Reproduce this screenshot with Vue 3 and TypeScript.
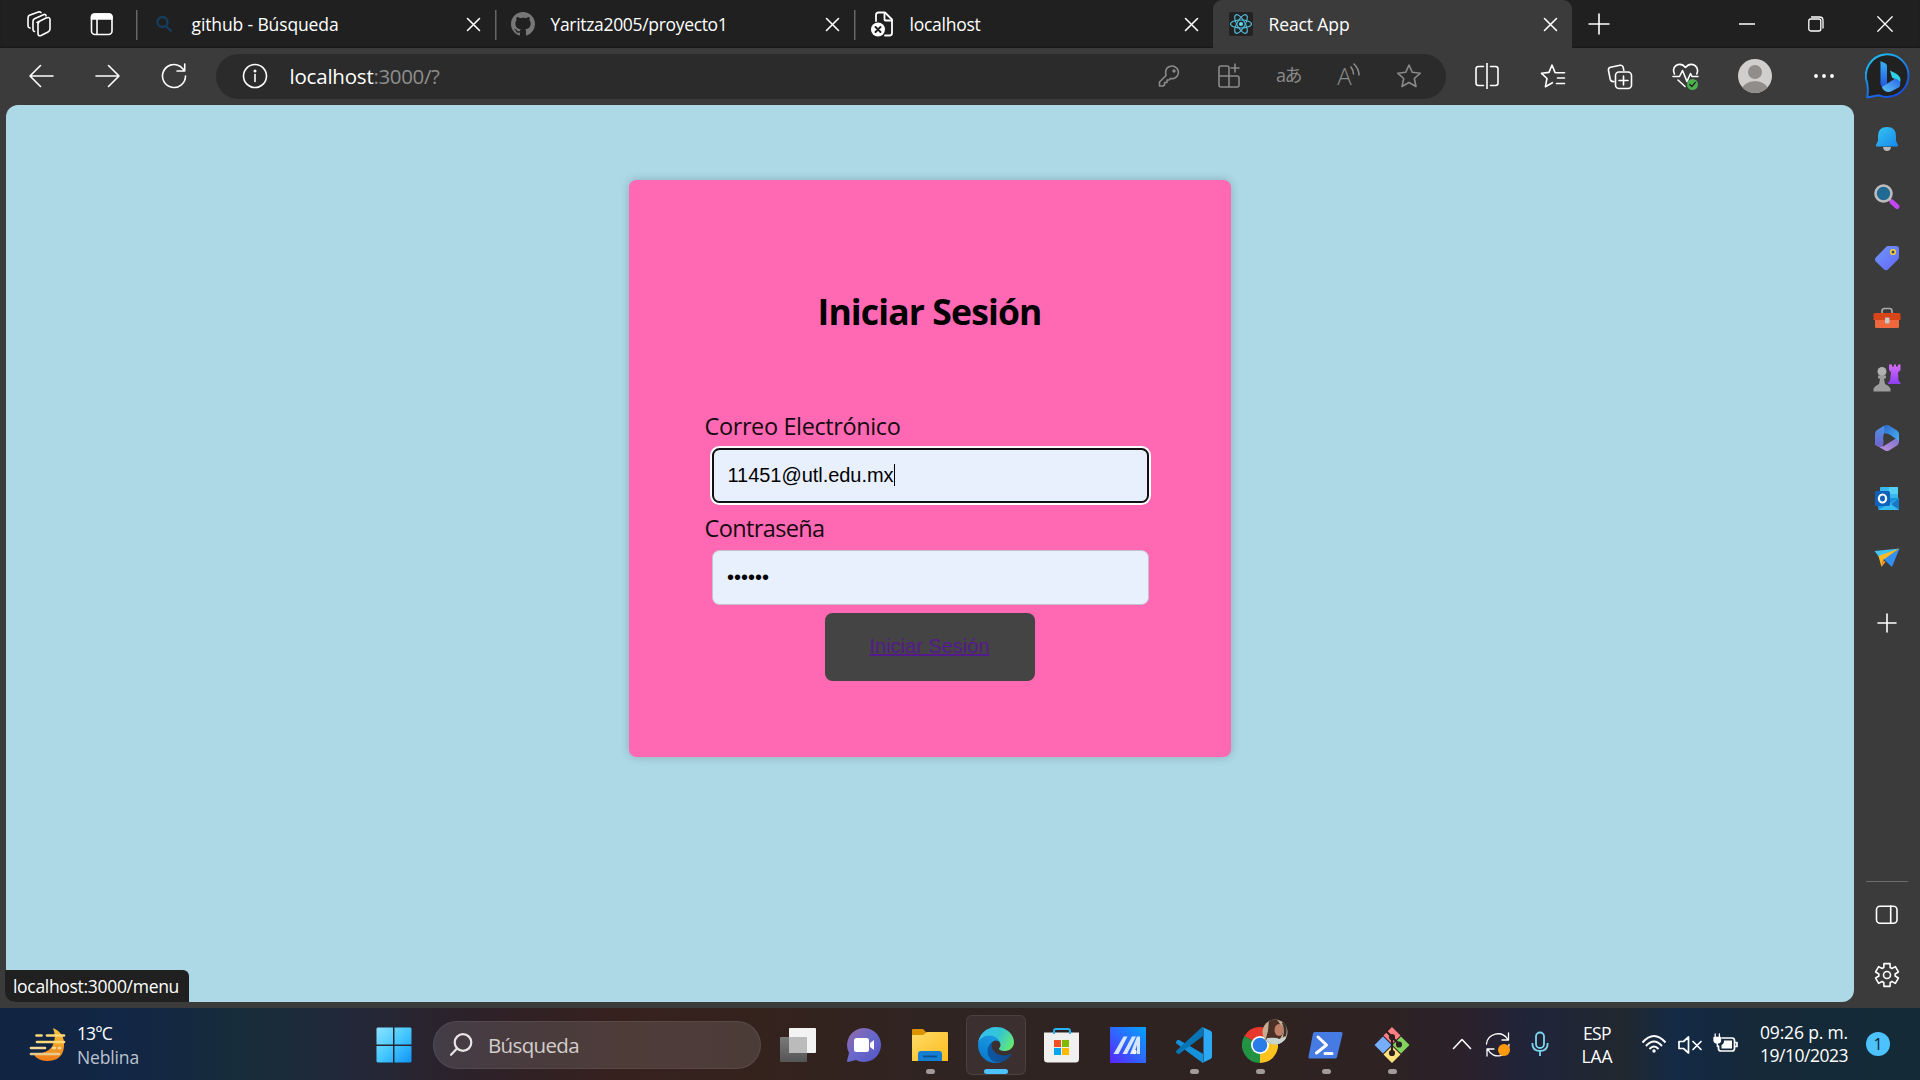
<script setup lang="ts">
import type { Directive } from 'vue'

interface Tab {
  id: string
  title: string
  textWidth: number
  active?: boolean
}

const tabs: Tab[] = [
  { id: 'search', title: 'github - Búsqueda', textWidth: 147 },
  { id: 'github', title: 'Yaritza2005/proyecto1', textWidth: 177 },
  { id: 'error', title: 'localhost', textWidth: 71 },
  { id: 'react', title: 'React App', textWidth: 81, active: true },
]

const lang = ['ESP', 'LAA']

// Tracks a label out or in so that it occupies the given width in pixels.
const vFit: Directive<HTMLElement, number> = {
  mounted(el, binding) {
    const count = (el.textContent ?? '').trim().length
    const width = el.getBoundingClientRect().width
    el.style.letterSpacing = `${(binding.value - width) / count}px`
  },
}

function gearPath(): string {
  const points: string[] = []
  const polar = (r: number, deg: number) => {
    const a = (deg * Math.PI) / 180
    return `${(13 + r * Math.cos(a)).toFixed(2)} ${(13 + r * Math.sin(a)).toFixed(2)}`
  }
  for (let k = 0; k < 6; k++) {
    const base = -90 + 60 * k
    points.push(polar(8.2, base - 23), polar(11.8, base - 15), polar(11.8, base + 15), polar(8.2, base + 23))
  }
  return `M${points.join('L')}Z`
}
const gear = gearPath()
</script>

<template>
  <div class="screen">
    <header class="tabstrip">
      <div class="tools">
        <svg width="26" height="26" viewBox="0 0 26 26" class="ln">
          <path d="M11 11.5 20 7q4-1.500 4 1.500V18q0 2-2 3l-7 3.500q-3 1-3-2V13q0-1 1-1.700Z" />
          <path d="M8.500 20.500Q7 20 7 18.500V10q0-1.500 1.500-2.300L18 3.500M4 17q-2-.5-2-2V7q0-2 1.500-2.700L13 .8q1.500 0 2 .8M20 5q0-2-2-1.500" />
        </svg>
        <svg width="24" height="24" viewBox="0 0 24 24" class="ln">
          <rect x="1.500" y="2" width="20.500" height="20.500" rx="3.500" />
          <path d="M1.500 7V5q0-3 3-3H19q3 0 3 3v2Z" fill="#fff" />
          <path d="M7 7v15" />
        </svg>
      </div>
      <div v-for="tab in tabs" :key="tab.id" class="tab" :class="{ active: tab.active }">
        <div class="fav">
          <svg v-if="tab.id === 'search'" width="18" height="18" viewBox="0 0 18 18" fill="none" stroke="#153e61" stroke-width="2.300">
            <circle cx="7.500" cy="7" r="5" /><path d="m11 11 5.500 5.500" />
          </svg>
          <svg v-else-if="tab.id === 'github'" width="24" height="24" viewBox="0 0 16 16" fill="#777">
            <path d="M8 0C3.580 0 0 3.580 0 8c0 3.540 2.290 6.530 5.470 7.590.4.070.55-.17.55-.38 0-.19-.01-.82-.01-1.490-2.010.37-2.530-.49-2.690-.94-.09-.23-.48-.94-.82-1.130-.28-.15-.68-.52-.01-.53.63-.01 1.080.58 1.230.82.72 1.210 1.870.87 2.330.66.07-.52.28-.87.51-1.070-1.780-.2-3.640-.89-3.640-3.950 0-.87.31-1.590.82-2.150-.08-.2-.36-1.020.08-2.120 0 0 .67-.21 2.200.82.64-.18 1.320-.27 2-.27s1.360.09 2 .27c1.530-1.040 2.200-.82 2.200-.82.44 1.100.16 1.920.08 2.120.51.56.82 1.270.82 2.150 0 3.070-1.870 3.750-3.650 3.950.29.25.54.73.54 1.480 0 1.070-.01 1.930-.01 2.200 0 .21.15.46.55.38A8.010 8.010 0 0 0 16 8c0-4.420-3.580-8-8-8Z" />
          </svg>
          <svg v-else-if="tab.id === 'error'" width="24" height="26" viewBox="0 0 24 26" class="ln">
            <path d="M6 10V4q0-2.500 2.500-2.500H15l7 7V22q0 2.500-2.500 2.500H15" stroke-width="1.800" />
            <path d="M14.500 2v6.500q0 1 1 1H22" stroke-width="1.800" />
            <circle cx="8" cy="18.500" r="7" fill="#fff" stroke="none" />
            <path d="m5.500 16 5 5m0-5-5 5" stroke="#202020" stroke-width="2" />
          </svg>
          <svg v-else width="24" height="24" viewBox="0 0 24 24" fill="none" stroke="#53c1de" stroke-width="1.100">
            <rect width="24" height="24" rx="2" fill="#222" stroke="none" />
            <ellipse cx="12" cy="12" rx="10.500" ry="4" />
            <ellipse cx="12" cy="12" rx="10.500" ry="4" transform="rotate(60 12 12)" />
            <ellipse cx="12" cy="12" rx="10.500" ry="4" transform="rotate(120 12 12)" />
            <circle cx="12" cy="12" r="2" fill="#61dafb" stroke="none" />
          </svg>
        </div>
        <div class="title"><span v-fit="tab.textWidth">{{ tab.title }}</span></div>
        <svg class="close ln" width="15" height="15" viewBox="0 0 15 15"><path d="m1.500 1.500 12 12m0-12-12 12" /></svg>
      </div>
      <svg class="newtab ln" width="22" height="22" viewBox="0 0 22 22"><path d="M11 1v20M1 11h20" /></svg>
      <div class="winctl">
        <svg width="16" height="16" viewBox="0 0 16 16" class="ln"><path d="M0 8h16" /></svg>
        <svg width="16" height="16" viewBox="0 0 16 16" class="ln thin"><rect x=".8" y="3" width="12" height="12" rx="2" /><path d="M3.500 1h8q3.500 0 3.500 3.500V12" /></svg>
        <svg width="16" height="16" viewBox="0 0 16 16" class="ln thin"><path d="m.8.8 14.400 14.400m0-14.400L.8 15.200" /></svg>
      </div>
    </header>

    <nav class="toolbar">
      <div class="slot w66"><svg width="26" height="24" viewBox="0 0 26 24" class="ln"><path d="M25 12H2M12.500 1.500 2 12l10.500 10.500" /></svg></div>
      <div class="slot w66"><svg width="26" height="24" viewBox="0 0 26 24" class="ln"><path d="M1 12h23M13.500 1.500 24 12 13.500 22.500" /></svg></div>
      <div class="slot w66"><svg width="26" height="26" viewBox="0 0 26 26" class="ln"><path d="M24.500 13A11.500 11.500 0 1 1 19 3.200L23.500 7.500M23.700 1v7H16" /></svg></div>
      <div class="address">
        <div class="info"><svg width="26" height="26" viewBox="0 0 26 26" class="ln"><circle cx="13" cy="13" r="11.500" /><path d="M13 11.500v7" /><circle cx="13" cy="8" r=".7" fill="#fff" /></svg></div>
        <div class="url"><b v-fit="84">localhost</b><span v-fit="66">:3000/?</span></div>
        <div class="slot w60"><svg width="22" height="22" viewBox="0 0 22 22" class="dim"><path d="M8 10.500Q6.500 4 11 1.800q4-2 7.500 1 3 3.500 1.200 7.300-2.200 4.200-7.200 3.400L11 15H9v2.500H6.500V20L5 21H1.500v-4Z" /><circle cx="16" cy="6" r=".9" /></svg></div>
        <div class="slot w60"><svg width="24" height="26" viewBox="0 0 24 26" class="dim"><path d="M12 13V5q0-2-2-2H4Q2 3 2 5v17q0 2 2 2h16q2 0 2-2v-7q0-2-2-2H2M12 13v11M18 1v8M14 5h8" /></svg></div>
        <div class="slot w60 glyph cjk"><span v-fit="25">aあ</span></div>
        <div class="slot w60 read"><span>A</span><svg width="10" height="15" viewBox="0 0 10 15" class="dim"><path d="M1 4q2.500 3.500 2.500 7M4 1q5 5 5 11" /></svg></div>
        <div class="slot w60"><svg width="26" height="26" viewBox="0 0 26 26" class="dim"><path d="m13 2 3.300 7.300 8 .9-6 5.300 1.700 8L13 19.500l-7 4 1.700-8-6-5.300 8-.9Z" /></svg></div>
      </div>
      <div class="slot w66"><svg width="26" height="26" viewBox="0 0 26 26" class="ln"><path d="M9.500 3.500h-5Q2 3.500 2 6v14q0 2.500 2.500 2.500h5M16.500 3.500h5Q24 3.500 24 6v14q0 2.500-2.500 2.500h-5M13 0v26" /></svg></div>
      <div class="slot w66"><svg width="26" height="26" viewBox="0 0 26 26" class="ln"><path d="M15.500 9.700h9M17.500 15h7M16.500 20.500h8M16 9.700l-1-.3L12 2 9 9.400l-7.500.9L7 15.500l-1.600 8.200 7-4" /></svg></div>
      <div class="slot w66"><svg width="26" height="27" viewBox="0 0 26 27" class="ln"><path d="M7 18.500q-3 .5-3.800-2.300L1.500 7.500Q1 5 3.500 4.300l9.500-2q2.500-.5 3.200 2l.6 3" /><rect x="8.500" y="9" width="16" height="16.500" rx="3.500" /><path d="M16.500 13v9M12 17.500h9" /></svg></div>
      <div class="slot w66"><svg width="28" height="27" viewBox="0 0 28 27" class="ln"><path d="M2.500 11Q0 5.500 4 2.500q5.500-3 9.500 2 4-5 9.500-2 4 3 1.800 8.500M1 13.500h6.500l3-6 4.500 11 3.500-8 1.500 3h6M6 17l7 6.500" /><circle cx="20.500" cy="21.500" r="5.500" fill="#4caf50" stroke="none" /><path d="m17.800 21.500 2 2 3.500-4" stroke="#222" stroke-width="1.300" /></svg></div>
      <div class="slot avatar"><svg width="34" height="34" viewBox="0 0 34 34"><defs><clipPath id="av"><circle cx="17" cy="17" r="17" /></clipPath></defs><g clip-path="url(#av)"><rect width="34" height="34" fill="#d1cfcd" /><circle cx="17" cy="13" r="7" fill="#918d8b" /><ellipse cx="17" cy="31" rx="13" ry="9" fill="#918d8b" /></g></svg></div>
      <div class="slot dots"><svg width="22" height="6" viewBox="0 0 22 6" fill="#fff"><circle cx="3" cy="3" r="1.900" /><circle cx="11" cy="3" r="1.900" /><circle cx="19" cy="3" r="1.900" /></svg></div>
      <div class="slot bing"><svg width="46" height="46" viewBox="0 0 46 46">
        <defs>
          <linearGradient id="b1" x1="0" y1="0" x2=".6" y2="1"><stop stop-color="#20c8ee" /><stop offset="1" stop-color="#164fe4" /></linearGradient>
          <linearGradient id="b2" x1="0" y1="0" x2="0" y2="1"><stop stop-color="#36b3f7" /><stop offset="1" stop-color="#2155e4" /></linearGradient>
          <linearGradient id="b3" x1="0" y1="1" x2="1" y2="0"><stop stop-color="#5bc8fa" /><stop offset="1" stop-color="#2a63e8" /></linearGradient>
        </defs>
        <path d="M2.200 44.500Q3.500 38 2.200 30A21.300 21.300 0 1 1 14 42.300Q9 43 2.200 44.500Z" fill="#212121" stroke="url(#b1)" stroke-width="1.900" stroke-linejoin="round" />
        <path d="m15.500 8 5 2.500q1.500.8 1.500 2.500v18l-4 3.500q-2.500-1.500-2.500-4Z" fill="url(#b2)" />
        <path d="m25 17.500 6 3q6 3.500 4 9.500-4-4-8-5.500Z" fill="#2cd1e5" />
        <path d="m17 34 10-6.500 3.500-2q7 2.500 4 8.500l-7.500 4q-3.500 2-7 0Q17 36 17 34Z" fill="url(#b3)" />
      </svg></div>
    </nav>

    <div class="body">
      <main class="page">
        <form class="card" @submit.prevent>
          <h1><span v-fit="224">Iniciar Sesión</span></h1>
          <label><span v-fit="196">Correo Electrónico</span></label>
          <div class="field focused"><span v-fit="166">11451@utl.edu.mx</span><i class="caret"></i></div>
          <label><span v-fit="120">Contraseña</span></label>
          <div class="field second">••••••</div>
          <div class="btn"><a v-fit="120">Iniciar Sesión</a></div>
        </form>
        <div class="status"><span v-fit="166">localhost:3000/menu</span></div>
      </main>
      <aside class="sidebar">
        <div class="side"><svg width="24" height="26" viewBox="0 0 24 26"><defs><linearGradient id="bell" x1="0" y1="0" x2="1" y2="1"><stop stop-color="#36c5f0" /><stop offset="1" stop-color="#1688ed" /></linearGradient></defs><path d="M8 21h8q-.5 4-4 4t-4-4Z" fill="#b9b9c0" /><path d="M12 1q9 0 9 9v5l2 4q.5 1.500-1 1.500H2Q.5 20.500 1 19l2-4v-5q0-9 9-9Z" fill="url(#bell)" /></svg></div>
        <div class="side up lens"><svg width="28" height="28" viewBox="0 0 28 28"><path d="m16 16 3 3" stroke="#999" stroke-width="3" /><path d="m19 19 5 4.500" stroke="#c346f2" stroke-width="5" stroke-linecap="round" /><circle cx="10.500" cy="10.500" r="8" fill="#216a94" stroke="#bdbdbd" stroke-width="2.600" /></svg></div>
        <div class="side up"><svg width="26" height="26" viewBox="0 0 26 26"><defs><linearGradient id="tag" x1="0" y1="0" x2="1" y2="1"><stop stop-color="#7098ff" /><stop offset="1" stop-color="#6366f5" /></linearGradient></defs><path d="M14 1h8q3 0 3 3v8q0 1.500-1 2.500L14 24.500q-2 1.500-4 0L1.800 16.500q-1.500-2 0-4L12 2q1-1 2-1Z" fill="url(#tag)" /><circle cx="19" cy="7" r="2.300" fill="#36407a" stroke="#f8d22b" stroke-width="1.600" /></svg></div>
        <div class="side up"><svg width="28" height="24" viewBox="0 0 28 24"><path d="M9 8V5q0-2.500 2.500-2.500h5Q19 2.500 19 5v3" fill="none" stroke="#aaa" stroke-width="1.700" /><rect x="2" y="10" width="24" height="12" rx="1.500" fill="#ee673d" /><path d="M2 7h24q1.500 0 1.500 1.500V14H.5V8.500Q.5 7 2 7Z" fill="#d84519" /><rect x="12" y="11.500" width="4.500" height="6" rx="1" fill="#c8c8c8" /></svg></div>
        <div class="side up"><svg width="28" height="28" viewBox="0 0 28 28"><defs><linearGradient id="rook" x1="0" y1="0" x2="0" y2="1"><stop stop-color="#d66cf9" /><stop offset="1" stop-color="#8d3df0" /></linearGradient></defs><path d="M16 .5h3v2h2v-2h2v2h2v-2h2.500V6L25 8.500l.5 8 2 2.500v1H15v-1l2-2.500 1-8L16 6Z" fill="url(#rook)" /><circle cx="9" cy="7.500" r="4.500" fill="#b0b0b0" /><path d="M5 11.500h8v2.500l-2 1 1 5q4 1.500 5.500 4.500v3H.5v-3Q2 21.500 6 20l1-5-2-1Z" fill="#9c9c9c" /></svg></div>
        <div class="side up"><svg width="26" height="28" viewBox="0 0 26 28"><defs><linearGradient id="m1" x1="0" y1="0" x2="0" y2="1"><stop stop-color="#4a93e6" /><stop offset="1" stop-color="#7161c8" /></linearGradient><linearGradient id="m2" x1="0" y1="0" x2="1" y2="1"><stop stop-color="#2e69cf" /><stop offset="1" stop-color="#45b3f2" /></linearGradient><linearGradient id="m3" x1="0" y1="1" x2="1" y2="0"><stop stop-color="#c495dc" /><stop offset="1" stop-color="#7c6fd0" /></linearGradient></defs><path d="M1 17v2q0 1.500 1.500 2.500l8.500 5q2 1 4 0l8-5q2-1.500 2-4v-5l-8 5-8 5Z" fill="url(#m3)" /><path d="M10 1.800 3 6Q1 7.500 1 10v9q2 4 5 4 3.500-.3 3.500-4V11.500Q9.500 9 12 7.500Z" fill="url(#m1)" /><path d="M10 1.800q3-1.600 5-.3l8 5q2 1.200 2 3.500v7L17 11.500 10.500 9Z" fill="url(#m2)" /><path d="m13.500 9.500 4 2.300v4.700l-4 2.300-4-2.300v-4.700Z" fill="#3b3b3b" /></svg></div>
        <div class="side"><svg width="26" height="26" viewBox="0 0 26 26"><rect x="6" y="1" width="18" height="14" rx="1" fill="#39b8ee" /><path d="M15 1h8q1 0 1 1v6h-9Z" fill="#55d0f5" /><path d="M4 12h21v12H6q-2 0-2-2Z" fill="#1892dc" /><path d="m4 24 21-12v12Z" fill="#35bdf3" /><path d="m17 18 8-6v12Z" fill="#1878c8" /><rect x="1" y="5" width="15" height="15" rx="1.500" fill="#0f62bc" /><ellipse cx="8.500" cy="12.500" rx="3.600" ry="4" fill="none" stroke="#fff" stroke-width="2.200" /></svg></div>
        <div class="side"><svg width="26" height="22" viewBox="0 0 26 22"><path d="M.5 3 25.500.5 5 9Z" fill="#43c3ee" /><path d="M25.500.5 18 19 9.500 11Z" fill="#348ff0" /><path d="m4.500 8 21-7.500L9 12l-1.500 7Z" fill="#ffbb25" /><path d="m9 12-1.500 7 4-5Z" fill="#f79620" /></svg></div>
        <div class="side plus"><svg width="20" height="20" viewBox="0 0 20 20" class="ln"><path d="M10 1v18M1 10h18" /></svg></div>
        <div class="sidebottom">
          <div class="side"><svg width="24" height="20" viewBox="0 0 24 20" class="ln"><rect x="1.500" y="1.200" width="20.500" height="17" rx="3.500" /><path d="M15.700 1v17" /></svg></div>
          <div class="side"><svg width="26" height="26" viewBox="0 0 26 26" class="ln"><path :d="gear" /><circle cx="13" cy="13" r="3.500" /></svg></div>
        </div>
      </aside>
    </div>

    <footer class="taskbar">
      <div class="weather">
        <svg width="38" height="36" viewBox="0 0 38 36"><defs><linearGradient id="moon" x1="0" y1="0" x2="0" y2="1"><stop stop-color="#f5c63b" /><stop offset="1" stop-color="#f07c18" /></linearGradient></defs><path d="M24 1q12 5 11 18-1 15-17 15Q8 34 4 26q12 2 19-6 5-9 1-19Z" fill="url(#moon)" /><g stroke-width="2.700" stroke-linecap="round"><path d="M7.500 8.500h5M18 8.500h17M8 15h27" stroke="#ffd978" /><path d="M2 21h14M24 21h2M30 21h1" stroke="#f6d694" /><path d="M2 27h28" stroke="#e8ca8e" /></g></svg>
        <div class="lines"><div><span v-fit="35">13°C</span></div><div class="muted"><span v-fit="62">Neblina</span></div></div>
      </div>
      <svg class="start" width="36" height="36" viewBox="0 0 36 36"><defs><linearGradient id="win" x1="0" y1="0" x2="1" y2="1"><stop stop-color="#8ee3ff" /><stop offset=".5" stop-color="#45c8ff" /><stop offset="1" stop-color="#0f93f8" /></linearGradient></defs><path d="M1.500.5H17v17H.5v-16ZM18.500.5h16l1 1v16h-17ZM.5 19H17v16.500H1.500l-1-1ZM18.500 19h17v15.500l-1 1h-16Z" fill="url(#win)" /></svg>
      <div class="search"><svg width="26" height="26" viewBox="0 0 26 26" fill="none" stroke="#eae6e6" stroke-width="2.200" stroke-linecap="round"><circle cx="15" cy="10.500" r="8.300" /><path d="m9 16.500-6 6.300" /></svg><span v-fit="91">Búsqueda</span></div>
      <div class="apps">
        <div class="app"><svg width="36" height="36" viewBox="0 0 36 36"><defs><linearGradient id="tv" x1="0" y1="0" x2="0" y2="1"><stop stop-color="#7b7b7b" /><stop offset="1" stop-color="#555" /></linearGradient></defs><rect x="9" y="1" width="27" height="25" rx="1" fill="#f3f3f3" /><rect x="0" y="10" width="27" height="25" rx="1" fill="url(#tv)" /><path d="M9 10h18v16H9Z" fill="#bbb" /></svg></div>
        <div class="app"><svg width="36" height="36" viewBox="0 0 36 36"><defs><linearGradient id="chat" x1="0" y1="0" x2="1" y2="1"><stop stop-color="#9568a8" /><stop offset=".5" stop-color="#6769cb" /><stop offset="1" stop-color="#5752c4" /></linearGradient></defs><path d="M18 1a17 17 0 1 1-8 32l-8 2q-1 0-1-1l2-8A17 17 0 0 1 18 1Z" fill="url(#chat)" /><rect x="8" y="11" width="15" height="14" rx="2.500" fill="#fff" /><path d="m24 16 4-3v10l-4-3Z" fill="#fff" /></svg></div>
        <div class="app run"><svg width="36" height="36" viewBox="0 0 36 36"><defs><linearGradient id="fold" x1="0" y1="0" x2="1" y2="1"><stop stop-color="#ffda68" /><stop offset="1" stop-color="#fcbd1d" /></linearGradient></defs><path d="M0 3q0-1 1-1h10l4 4v3H0Z" fill="#dc9300" /><path d="M0 8h11l4-3h20q1 0 1 1v28H0Z" fill="url(#fold)" /><path d="M6 34V27q0-3 3-3h18q3 0 3 3v7Z" fill="#147fd2" /><path d="M11 29.500h14" stroke="#0b5390" stroke-width="2" /></svg></div>
        <div class="app current"><svg width="36" height="36" viewBox="0 0 256 256">
          <defs><linearGradient id="e1" x1="0" y1=".5" x2="1" y2=".5"><stop stop-color="#0c59a4" /><stop offset="1" stop-color="#114a8b" /></linearGradient><linearGradient id="e2" x1=".7" y1="0" x2=".3" y2="1"><stop stop-color="#1b9de2" /><stop offset="1" stop-color="#0878ce" /></linearGradient><linearGradient id="e3" x1="0" y1=".3" x2="1" y2=".7"><stop stop-color="#35c1f1" /><stop offset=".5" stop-color="#34c5d5" /><stop offset="1" stop-color="#66eb6e" /></linearGradient></defs>
          <path fill="url(#e1)" d="M231 190.500c-3.400 1.800-6.900 3.400-10.500 4.700-11.500 4.300-23.700 6.500-35.900 6.500-47.300 0-88.500-32.500-88.500-74.300.1-11.400 6.400-21.900 16.400-27.300-42.800 1.800-53.800 46.400-53.800 72.500 0 74 68.100 81.400 82.800 81.400 7.900 0 19.800-2.300 27-4.600l1.300-.4c27.600-9.500 51-28.100 66.600-52.800 1.200-1.900.6-4.300-1.200-5.500-1.300-.8-2.900-.9-4.200-.2Z" />
          <path fill="url(#e2)" d="M105.700 241.400c-8.900-5.500-16.600-12.800-22.700-21.300-26.300-36-18.400-86.500 17.600-112.800 3.800-2.700 7.700-5.200 11.900-7.200 3.100-1.500 8.400-4.100 15.500-4 10.100.1 19.600 4.900 25.700 13 4 5.400 6.300 11.900 6.400 18.700 0-.2 24.500-79.600-80-79.600-43.900 0-80 41.700-80 78.200-.2 19.300 4 38.500 12.100 56 27.600 58.800 94.800 87.600 156.400 67.100-21.100 6.600-44.100 3.700-62.900-8.100Z" />
          <path fill="url(#e3)" d="M152.300 148.900c-.8 1-3.300 2.500-3.300 5.700 0 2.600 1.700 5.100 4.700 7.200 14.400 10 41.500 8.700 41.600 8.700 10.700 0 21.100-2.900 30.300-8.300 18.800-11 30.400-31.100 30.400-52.900.3-22.400-8-37.300-11.300-43.900C223.500 23.900 177.700 0 128 0 58 0 1 56.200 0 126.200c.5-36.500 36.800-66 80-66 3.500 0 23.500.3 42 10.100 16.300 8.600 24.900 18.900 30.800 29.200 6.200 10.700 7.300 24.100 7.300 29.500 0 5.300-2.700 13.300-7.800 19.900Z" />
        </svg></div>
        <div class="app"><svg width="36" height="36" viewBox="0 0 36 36"><path d="M0 5.500h35V32q0 3.500-3.500 3.500h-28Q0 35.500 0 32Z" fill="#f0f0f0" /><path d="M10 7V4q0-2 2-2h12q2 0 2 2v3" fill="none" stroke="#28b4f0" stroke-width="2" /><path d="M10 13h7v7h-7Z" fill="#f25022" /><path d="M18 13h7v7h-7Z" fill="#7fba00" /><path d="M10 21h7v7h-7Z" fill="#00a4ef" /><path d="M18 21h7v7h-7Z" fill="#ffb900" /></svg></div>
        <div class="app"><svg width="36" height="36" viewBox="0 0 36 36"><defs><linearGradient id="as" x1="0" y1="1" x2="1" y2="0"><stop stop-color="#5a24fa" /><stop offset=".5" stop-color="#2e68ff" /><stop offset="1" stop-color="#03a3fc" /></linearGradient></defs><path d="M0 0h36v36H0Z" fill="url(#as)" /><path d="m3.500 27 10-17.500h4L8.500 27ZM12.500 27l9.500-17.500h4L17 27ZM20 27l7-17.500h3V27h-3V18l-3 9Z" fill="#d7e6ff" /><circle cx="24.500" cy="25" r="2.200" fill="#fff" /></svg></div>
        <div class="app run"><svg width="36" height="36" viewBox="0 0 36 36"><path d="M27 0 9 17.500 3.500 13.300q-1-.8-2 0L.5 14.300q-.8 1 0 2L27 36V27L12 18 27 9Z" fill="#0b83c9" /><path d="M27 36 .5 16.500q-.9-1.200 0-2l1-1.200q1-.8 2 0L27 27Z" fill="#1590db" /><path d="M27 9 3.500 26.700q-1 .8-2 0l-1-1q-.9-1.200 0-2.200L25 1l2-1Z" fill="#0874b5" /><path d="m26 0 8.500 3.800q1.500.8 1.500 2.500v23.500q0 1.500-1.500 2.300L26 36q1.500-.8 1.500-2.500v-31Q27.500.8 26 0Z" fill="#2ba9f4" /></svg></div>
        <div class="app run"><svg width="36" height="36" viewBox="0 0 36 36"><path d="M18 18 2.400 9A18 18 0 0 1 33.600 9Z" fill="#e8382c" /><path d="M18 18 33.600 9A18 18 0 0 1 18 36Z" fill="#fcc31e" /><path d="M18 18v18A18 18 0 0 1 2.400 9Z" fill="#229342" /><path d="m18 18 8 4-8 14Z" fill="#fcc31e" /><circle cx="18" cy="18" r="9" fill="#fff" /><circle cx="18" cy="18" r="7.300" fill="#2a7de9" /></svg>
          <svg class="photo" width="26" height="26" viewBox="0 0 26 26"><defs><clipPath id="ph"><circle cx="13" cy="13" r="12.500" /></clipPath></defs><g clip-path="url(#ph)"><path d="M0 0h26v26H0Z" fill="#c5ad93" /><path d="M7 0q8-2 11 5l3 9-3 6-9 4-7 2 4-14Z" fill="#4b3028" /><ellipse cx="17" cy="11" rx="4.500" ry="6" fill="#bd7f68" /><path d="M22 2q4 6 2 15l-3 1q2-8-1-14Z" fill="#3c312d" /><path d="M5 19q10-1 12 1l7-2v8H2Z" fill="#c7d4cf" /></g></svg>
        </div>
        <div class="app run"><svg width="36" height="36" viewBox="0 0 36 36"><path d="M6.500 5H33q2 0 1.500 2L29 30q-.5 1.500-2 1.500H1.500q-1.500 0-1-2L5 6.500Q5.500 5 6.500 5Z" fill="#457be3" /><path d="m10 10 8.500 8L8.500 26M17 26.500h7" fill="none" stroke="#fff" stroke-width="3" stroke-linecap="round" stroke-linejoin="round" /></svg></div>
        <div class="app run"><svg width="36" height="36" viewBox="0 0 36 36"><path d="m18 0 8.500 8.500-8.500 8.500-8.500-8.500Z" fill="#ff7f82" /><path d="m9 9.500 8.500 8.500L9 26.500.5 18Z" fill="#77adff" /><path d="m27 9.500 8.500 8.500-8.500 8.500-8.500-8.500Z" fill="#83d45e" /><path d="m18 19 8.500 8.500L18 36l-8.500-8.500Z" fill="#ffe27b" /><g stroke="#2c2020" stroke-width="2.200" fill="#2c2020"><path d="m12 4 6 6v16M18 10l8 8" fill="none" /><circle cx="18" cy="10" r="2" /><circle cx="25" cy="17.500" r="2" /><circle cx="18" cy="26" r="2" /></g></svg></div>
      </div>
      <div class="tray">
        <svg class="chev ln" width="20" height="12" viewBox="0 0 20 12"><path d="m1.500 10.500 8.500-9 8.500 9" /></svg>
        <svg class="sync ln" width="26" height="26" viewBox="0 0 26 26"><path d="M1.500 13A11.500 11.500 0 0 1 22.500 8M23.500 2v7H17M24 13.500A11 11 0 0 1 3 18.500M2 25v-7h7" stroke-width="1.300" /><circle cx="19" cy="19" r="6" fill="#ff9a0b" stroke="none" /></svg>
        <svg class="mic" width="18" height="26" viewBox="0 0 18 26" fill="none" stroke="#7dd5ef" stroke-width="1.800"><rect x="5" y="1.500" width="8" height="15.500" rx="4" /><path d="M1.300 12q0 8 7.700 8t7.700-8M9 20v5" /></svg>
        <div class="lang"><span v-for="(l, i) in lang" :key="l"><span v-fit="i ? 31 : 28">{{ l }}</span></span></div>
        <svg class="wifi" width="26" height="20" viewBox="0 0 26 20" fill="none" stroke="#fff" stroke-width="2"><path d="M1.500 8.500q11.500-13 23 0M5 12q8-9 16 0M8.500 15q4.500-5 9 0" /><circle cx="13" cy="17" r="1.700" fill="#fff" stroke="none" /></svg>
        <svg class="vol ln" width="26" height="20" viewBox="0 0 26 20"><path d="M2 6.500h4.500l5-4.500v16l-5-4.500H2ZM16 6.500l8 8m0-8-8 8" stroke-width="1.700" /></svg>
        <svg class="bat ln" width="26" height="22" viewBox="0 0 26 22"><path d="M10 5h10q2.500 0 2.500 2.500v8q0 2.500-2.500 2.500H9q-2.500 0-2.500-2.500V13M23 9.500h2v4h-2" stroke-width="1.700" /><path d="M12 7.500h8v8H9.500V12q2.500-1 2.500-4.500Z" fill="#fff" stroke="none" /><path d="M2 4.500h6.500v3q0 2.500-3.200 2.500T2 7.500ZM3.200 4V1m4.200 3V1M5.300 10.500v3" fill="#fff" stroke-width="1.300" /></svg>
        <div class="clock"><span><span v-fit="88">09:26 p. m.</span></span><span><span v-fit="88">19/10/2023</span></span></div>
        <div class="badge">1</div>
      </div>
    </footer>
  </div>
</template>

<style>
body { margin: 0; overflow: hidden; }
</style>

<style scoped>
.screen { width: 1920px; height: 1080px; display: flex; flex-direction: column; background: #3b3b3b; color: #fff; font-family: "Open Sans", "Noto Sans", sans-serif; font-size: 17.5px; white-space: nowrap; overflow: hidden; }
svg { display: block; flex: none; }
.ln { fill: none; stroke: #fff; stroke-width: 1.6; stroke-linecap: round; stroke-linejoin: round; }
.thin { stroke-width: 1.3; }
.dim { fill: none; stroke: #8a8a8a; stroke-width: 1.6; stroke-linecap: round; stroke-linejoin: round; }
.slot { display: flex; align-items: center; justify-content: center; flex: none; }

.tabstrip { height: 48px; background: #202020; display: flex; align-items: center; flex: none; box-shadow: inset 0 -1px 1px #181818; }
.tools { width: 136px; height: 29px; display: flex; align-items: center; gap: 38px; padding-left: 26px; box-sizing: border-box; }
.tab { width: 359px; height: 48px; display: flex; align-items: center; box-sizing: border-box; padding-right: 14.5px; background: linear-gradient(#666, #666) 0 10px / 1.5px 30px no-repeat; }
.tab.active { background: #3b3b3b; border-radius: 9px 9px 0 0; }
.fav { width: 55.5px; padding-left: 1px; box-sizing: border-box; display: flex; justify-content: center; flex: none; }
.title { flex: 1; line-height: 24px; margin-top: -1px; }
.close { margin-top: 1px; }
.newtab { margin-left: 15.5px; }
.winctl { margin-left: auto; display: flex; gap: 53px; padding-right: 27px; }

.toolbar { height: 57px; display: flex; align-items: center; flex: none; padding-left: 8px; box-sizing: border-box; padding-bottom: 1px; }
.w66 { width: 66.5px; }
.w60 { width: 60px; }
.address { width: 1230px; height: 45px; margin: 1px 8px 0 9.5px; border-radius: 23px; background: #2b2b2b; display: flex; align-items: center; box-sizing: border-box; padding-right: 7px; padding-bottom: 1px; flex: none; }
.toolbar > .slot:nth-child(3) { width: 65px; }
.info { padding: 0 22px 0 26px; }
.url { flex: 1; font-size: 20.5px; line-height: 28px; color: #8e8e8e; }
.url b { font-weight: 400; color: #fff; }
.glyph { color: #8a8a8a; font-size: 18px; }
.cjk { font-family: "Open Sans", "Noto Sans CJK JP", sans-serif; line-height: 24px; margin-top: -2px; }
.read { color: #8a8a8a; font-size: 24px; font-family: "Open Sans", sans-serif; font-weight: 300; line-height: 28px; }
.read svg { margin: -12px 0 0 -2px; }
.avatar { width: 70px; }
.dots { width: 68px; }
.bing { width: 61px; }

.body { height: 903px; display: flex; flex: none; }
.page { position: relative; width: 1848px; height: 897px; margin-left: 6px; background: #add8e6; border-radius: 12px; display: flex; justify-content: center; align-items: flex-start; }
.card { margin: 75px 0 0 -1px; width: 602px; height: 577px; box-sizing: border-box; padding: 75px 74px 75px 76px; border-radius: 7.5px; background: #ff69b4; box-shadow: 0 0 10px rgba(0, 0, 0, .2); color: #000; display: flex; flex-direction: column; }
h1 { margin: 31px 2px 74px 0; font-size: 35.5px; line-height: 50px; font-weight: 700; text-align: center; }
label { font-size: 23.5px; line-height: 32px; height: 32px; margin-bottom: 5.5px; color: #140a10; }
.field { width: 437px; height: 55px; margin-left: 7.5px; box-sizing: border-box; flex: none; display: flex; align-items: center; padding-left: 15px; border: 1px solid #c3c3cc; border-radius: 7.5px; background: #e8f0fe; font-family: "Liberation Sans", Arial, sans-serif; font-size: 20px; margin-bottom: 9.5px; }
.focused { border: 2.500px solid #101010; padding-left: 13.500px; box-shadow: 0 0 0 2px #fff; }
.caret { width: 1.500px; height: 22px; background: #000; }
.field.second { margin-bottom: 8px; padding-left: 14px; }
.btn { width: 210px; height: 68px; margin: 0 auto 0 120px; border-radius: 7.5px; background: #444; display: flex; flex: none; align-items: center; justify-content: center; font-family: "Liberation Sans", Arial, sans-serif; font-size: 20px; line-height: 23px; padding-bottom: 1px; box-sizing: border-box; }
.btn a { color: #551a8b; text-decoration: underline; }
.status { position: absolute; left: -1px; bottom: 0; width: 184px; height: 32px; box-sizing: border-box; padding-left: 8px; line-height: 32px; background: #202020; border-radius: 0 6px 0 10px; }

.sidebar { width: 66px; padding-top: 4px; box-sizing: border-box; display: flex; flex-direction: column; }
.side { height: 60px; display: flex; align-items: center; justify-content: center; flex: none; box-sizing: border-box; }
.up { padding-bottom: 2px; }
.lens { padding-bottom: 4px; }
.plus { margin-top: 4px; }
.sidebottom { margin: auto 12px 4px; height: 123px; border-top: 1.500px solid #6c6c6c; box-sizing: border-box; padding-top: 3px; }

.taskbar { height: 72px; box-sizing: border-box; padding-top: 2px; display: flex; align-items: center; flex: none; background: linear-gradient(90deg, #112543 0, #122645 130px, #172d39 250px, #222839 350px, #2e2128 480px, #36211e 620px, #34221d 760px, #2f2422 960px, #2e2222 1380px, #2b212a 1460px, #20243a 1530px, #20282f 1625px, #142a45 1675px, #152938 1760px, #142b37 1920px); }
.weather { width: 376px; display: flex; align-items: center; box-sizing: border-box; padding-left: 29px; }
.lines { margin-left: 10px; line-height: 24px; }
.muted { color: #bcc4cf; }
.search { width: 328px; height: 48px; margin-left: 20.500px; box-sizing: border-box; border: 1px solid rgba(255, 255, 255, .07); border-radius: 24px; background: rgba(255, 255, 255, .12); display: flex; align-items: center; padding-left: 14px; font-size: 20.5px; color: #d3cccb; }
.search span { margin-left: 14.5px; line-height: 28px; }
.apps { display: flex; margin-left: 7.5px; gap: 6px; }
.app { position: relative; width: 60px; height: 60px; display: flex; align-items: center; justify-content: center; box-sizing: border-box; }
.current { background: rgba(255, 255, 255, .06); border-radius: 6px; box-shadow: inset 0 0 0 1px rgba(255, 255, 255, .08); }
.run::after, .current::after { content: ""; position: absolute; bottom: 1px; left: 25.5px; width: 9px; height: 5px; border-radius: 2.5px; background: #a09a99; }
.current::after { left: 18px; width: 24px; background: #4cc2ff; }
.photo { position: absolute; left: 32px; top: 4px; }
.tray { display: flex; align-items: center; margin-left: 30px; flex: 1; }
.chev { margin-top: -2px; }
.sync { margin-left: 13px; margin-top: -2px; }
.mic { margin-left: 20px; margin-top: -2px; }
.lang { display: flex; flex-direction: column; align-items: center; width: 32px; margin-left: 32px; line-height: 23px; margin-top: -1px; }
.wifi { margin-left: 28px; margin-top: -3px; }
.vol { margin-left: 9.5px; margin-top: -1px; }
.bat { margin-left: 9.5px; margin-top: -3px; }
.clock { margin-left: auto; display: flex; flex-direction: column; align-items: flex-end; line-height: 23px; margin-top: -2px; }
.badge { width: 24px; height: 24px; border-radius: 50%; background: #4cc2ff; color: #10202c; margin: -2px 30px 0 18px; text-align: center; line-height: 24px; font-size: 16px; }
</style>
